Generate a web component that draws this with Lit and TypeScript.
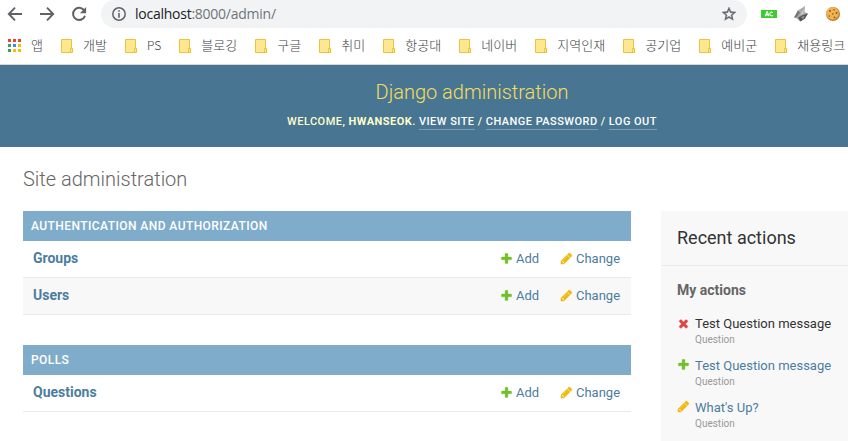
import { LitElement, html, css, svg } from "lit";
import { customElement, property } from "lit/decorators.js";

const ICONS: Record<string, { fill: string; d: string }> = {
  add: {
    fill: "#70bf2b",
    d: "M1600 796v192q0 40-28 68t-68 28h-416v416q0 40-28 68t-68 28h-192q-40 0-68-28t-28-68v-416h-416q-40 0-68-28t-28-68v-192q0-40 28-68t68-28h416v-416q0-40 28-68t68-28h192q40 0 68 28t28 68v416h416q40 0 68 28t28 68z",
  },
  change: {
    fill: "#efb80b",
    d: "M491 1536l91-91-235-235-91 91v107h128v128h107zm523-928q0-22-22-22-10 0-17 7l-542 542q-7 7-7 17 0 22 22 22 10 0 17-7l542-542q7-7 7-17zm-54-192l416 416-832 832h-416v-416zm683 96q0 53-37 90l-166 166-416-416 166-165q36-38 90-38 53 0 91 38l235 234q37 39 37 91z",
  },
  delete: {
    fill: "#dd4646",
    d: "M1490 1322q0 40-28 68l-136 136q-28 28-68 28t-68-28l-294-294-294 294q-28 28-68 28t-68-28l-136-136q-28-28-28-68t28-68l294-294-294-294q-28-28-28-68t28-68l136-136q28-28 68-28t68 28l294 294 294-294q28-28 68-28t68 28l136 136q28 28 28 68t-28 68l-294 294 294 294q28 28 28 68z",
  },
};

const icon = (name: string, size = 13) => html`<svg class="icon" width=${size} height=${size} viewBox="0 0 1792 1792">
  <path fill=${ICONS[name].fill} stroke=${ICONS[name].fill} stroke-width="50" d=${ICONS[name].d} />
</svg>`;

@customElement("browser-bar")
class BrowserBar extends LitElement {
  static styles = css`
    :host {
      display: block;
      height: 65px;
      box-sizing: border-box;
      border-bottom: 1px solid #d5d8dc;
      background: #fff;
      color: #3c4043;
      overflow: hidden;
    }
    svg { display: block; flex: none; }
    .toolbar { display: flex; align-items: center; height: 28px; }
    .nav { display: flex; gap: 16px; padding-left: 7px; width: 94px; flex: none; box-sizing: border-box; }
    .address {
      display: flex;
      align-items: center;
      box-sizing: border-box;
      width: 646px;
      height: 28px;
      margin-left: 7px;
      padding: 0 11px;
      border-radius: 14px;
      background: #f1f3f4;
    }
    .url {
      flex: 1;
      margin-left: 9px;
      font-family: "Open Sans", "Noto Sans", sans-serif;
      font-size: 14px;
      line-height: 28px;
      letter-spacing: -0.25px;
      color: #70757a;
    }
    .host { color: #202124; }
    .extensions { display: flex; align-items: center; margin-left: 14px; gap: 16px; }
    .bookmarks { display: flex; align-items: center; height: 35px; padding-left: 8px; }
    .bookmark { display: flex; align-items: center; flex: none; margin-right: 18px; }
    .label {
      margin: -1px 0 0 10px;
      font-family: "Noto Sans CJK KR", sans-serif;
      font-size: 13px;
      font-weight: 300;
      letter-spacing: 0.04px;
      line-height: 18px;
      white-space: nowrap;
    }
    .latin { font-size: 12px; letter-spacing: 0; }
  `;

  folders = ["개발", "PS", "블로깅", "구글", "취미", "항공대", "네이버", "지역인재", "공기업", "예비군", "채용링크"];
  dots = ["#ea4335", "#ea4335", "#ea4335", "#34a853", "#4285f4", "#fbbc05", "#34a853", "#fbbc05", "#fbbc05"];

  render() {
    return html`
      <div class="toolbar">
        <div class="nav">
          <svg width="16" height="16" viewBox="0 0 16 16" fill="none" stroke="#5f6368" stroke-width="1.9"><path d="M15 8H2M8 1.700 1.800 8 8 14.300" /></svg>
          <svg width="16" height="16" viewBox="0 0 16 16" fill="none" stroke="#5f6368" stroke-width="1.9"><path d="M1 8h13M8 1.700 14.200 8 8 14.300" /></svg>
          <svg width="16" height="16" viewBox="0 0 16 16"><path fill="none" stroke="#5f6368" stroke-width="2" d="M13.200 4.400A6.100 6.100 0 1 0 14 9.700" /><path fill="#5f6368" d="M15.100 1v6.200H8.900z" /></svg>
        </div>
        <div class="address">
          <svg width="14" height="14" viewBox="0 0 14 14"><circle cx="7" cy="7" r="6.2" fill="none" stroke="#5f6368" stroke-width="1.5" /><path fill="#5f6368" d="M6.200 3.200h1.600v1.600H6.200zM6.200 6h1.600v4.800H6.200z" /></svg>
          <span class="url"><span class="host">localhost</span>:8000/admin/</span>
          <svg width="14" height="14" viewBox="0 0 24 24"><path fill="#5f6368" stroke="#5f6368" stroke-width=".6" d="M24 8.600l-8.600-.8L12 0 8.600 7.900 0 8.600l6.500 5.700L4.600 22.800 12 18.300l7.400 4.500-1.900-8.500zM12 16l-4.500 2.800 1.200-5.200-4-3.500 5.300-.4L12 4.900l2.100 4.900 5.300.4-4 3.500 1.200 5.200z" /></svg>
        </div>
        <div class="extensions">
          <svg width="16" height="16" viewBox="0 0 16 16"><rect y="4" width="16" height="8" fill="#3ecb31" /><path d="M4.300 10.200 5.900 5.900h.5L7.700 10.200M5 8.900h2.200M12 6.700c-2.200-1.300-3.400 0-3.200 1.500.1 1.700 1.900 2.200 3.200 1.200" fill="none" stroke="#fff" stroke-width="1.1" /></svg>
          <svg width="16" height="16" viewBox="0 0 16 16"><path fill="#aaa" d="M12 0 11.500 6 15 7.500 11 13 7 15.500 4 12.500 1 11.500 3 8 5 4.500z" /><path fill="#777" d="M1 11.500 4 11 7 6.500 5 4.500 3 8z" /><path fill="#ccc" d="m10.500 3-3 5.500 3-.5z" /><path fill="#555" d="m5 11.500 5-2.500 5-1.500-3 5-4.500 3z" /><path fill="#999" d="m8 11 4-1-2 3z" /></svg>
          <svg width="16" height="16" viewBox="0 0 16 16"><circle cx="8" cy="8" r="7" fill="#c77c26" /><circle cx="7.500" cy="7.300" r="6.200" fill="#efb451" /><g fill="#8a5018"><circle cx="5" cy="5" r=".9" /><circle cx="9" cy="3.800" r=".8" /><circle cx="11.500" cy="7" r=".9" /><circle cx="7.800" cy="8" r=".8" /><circle cx="4.300" cy="10" r=".8" /><circle cx="9.600" cy="11.300" r=".9" /></g></svg>
        </div>
      </div>
      <div class="bookmarks">
        <div class="bookmark">
          <svg width="13" height="13" viewBox="0 0 13 13">
            ${this.dots.map((c, i) => svg`<rect x=${(i % 3) * 5} y=${Math.floor(i / 3) * 5} width="3" height="3" fill=${c} />`)}
          </svg>
          <span class="label">앱</span>
        </div>
        ${this.folders.map(
          (name) => html`<div class="bookmark">
            <svg width="12" height="14" viewBox="0 0 12 14"><path fill="#ffe78f" stroke="#e8c53d" d="M.5.500h10v9h1v4H.500z" /><path fill="#ffe78f" stroke="#e8c53d" d="M9.500 9.500h2v4h-2z" /></svg>
            <span class="label ${/^[A-Z]/.test(name) ? "latin" : ""}">${name}</span>
          </div>`
        )}
      </div>
    `;
  }
}

@customElement("app-module")
class AppModule extends LitElement {
  @property() caption = "";
  @property({ attribute: false }) models: string[] = [];

  static styles = css`
    :host { display: block; margin-bottom: 30px; }
    .caption {
      height: 30px;
      padding-left: 8px;
      background: #80accb;
      color: #fff;
      font-size: 12px;
      font-weight: 500;
      line-height: 30px;
      letter-spacing: 0.43px;
      text-transform: uppercase;
    }
    .row {
      display: flex;
      height: 37px;
      box-sizing: border-box;
      padding-left: 10px;
      border-bottom: 1px solid #eaeaea;
      color: #4c7d9e;
      font-size: 13px;
      line-height: 36px;
    }
    .row:nth-child(odd) { background: #f8f8f8; }
    .name { flex: 1; font-size: 14px; font-weight: 700; line-height: 35px; }
    .link { display: flex; align-items: center; gap: 3px; }
    .icon { margin-top: -1px; }
    .add { width: 60px; }
    .change { width: 71px; }
  `;

  render() {
    return html`
      <div class="caption">${this.caption}</div>
      ${this.models.map(
        (m) => html`<div class="row">
          <span class="name">${m}</span>
          <span class="link add">${icon("add")}Add</span>
          <span class="link change">${icon("change")}Change</span>
        </div>`
      )}
    `;
  }
}

@customElement("recent-actions")
class RecentActions extends LitElement {
  static styles = css`
    :host { display: block; width: 187px; height: 230px; background: #f8f8f8; flex: none; }
    .title {
      height: 55px;
      box-sizing: border-box;
      padding-left: 16px;
      border-bottom: 1px solid #eaeaea;
      color: #333;
      font-size: 18px;
      font-weight: 400;
      line-height: 54px;
      margin: 0;
    }
    .subtitle { margin: 0; padding: 15px 16px 0; color: #666; font-size: 14px; line-height: 18px; font-weight: 700; }
    .list { padding: 16px 0 0 16px; }
    .entry { display: flex; gap: 5px; height: 42px; }
    .entry .icon { margin-top: 1px; flex: none; }
    .entry.delete .icon { margin-top: 2px; }
    .message { color: #4c7d9e; font-size: 13px; line-height: 18px; white-space: nowrap; }
    .delete .message { color: #333; }
    .kind { color: #999; font-size: 10px; line-height: 14px; }
  `;

  entries = [
    { kind: "delete", text: "Test Question message" },
    { kind: "add", text: "Test Question message" },
    { kind: "change", text: "What's Up?" },
  ];

  render() {
    return html`
      <h2 class="title">Recent actions</h2>
      <h3 class="subtitle">My actions</h3>
      <div class="list">
        ${this.entries.map(
          (e) => html`<div class="entry ${e.kind}">
            ${icon(e.kind)}
            <div>
              <div class="message">${e.text}</div>
              <div class="kind">Question</div>
            </div>
          </div>`
        )}
      </div>
    `;
  }
}

@customElement("app-root")
class AppRoot extends LitElement {
  static styles = css`
    :host {
      display: block;
      height: 441px;
      overflow: hidden;
      background: #fff;
      font-family: Roboto, sans-serif;
    }
    .header {
      display: flex;
      flex-direction: column;
      align-items: center;
      height: 82px;
      box-sizing: border-box;
      padding: 15px 0 0 96px;
      background: #487692;
      color: #ffc;
    }
    .brand { margin: 0; color: #f5dd5d; font-size: 20px; font-weight: 300; line-height: 24px; }
    .tools {
      margin-top: 11px;
      font-size: 11px;
      font-weight: 500;
      line-height: 14px;
      letter-spacing: 0.47px;
      text-transform: uppercase;
      white-space: nowrap;
    }
    .tools strong { font-weight: 700; }
    .tool { color: #fff; border-bottom: 1px solid #7c9db1; padding-bottom: 1px; }
    .heading { margin: 0; padding: 20px 0 0 23px; color: #666; font-size: 20px; font-weight: 300; line-height: 24px; }
    .columns { display: flex; gap: 30px; padding: 20px 0 0 23px; }
    .modules { width: 608px; flex: none; }
  `;

  render() {
    return html`
      <browser-bar></browser-bar>
      <div class="header">
        <h1 class="brand">Django administration</h1>
        <div class="tools">
          Welcome, <strong>Hwanseok</strong>.
          <span class="tool">View site</span> / <span class="tool">Change password</span> / <span class="tool">Log out</span>
        </div>
      </div>
      <h1 class="heading">Site administration</h1>
      <div class="columns">
        <div class="modules">
          <app-module caption="Authentication and Authorization" .models=${["Groups", "Users"]}></app-module>
          <app-module caption="Polls" .models=${["Questions"]}></app-module>
        </div>
        <recent-actions></recent-actions>
      </div>
    `;
  }
}
